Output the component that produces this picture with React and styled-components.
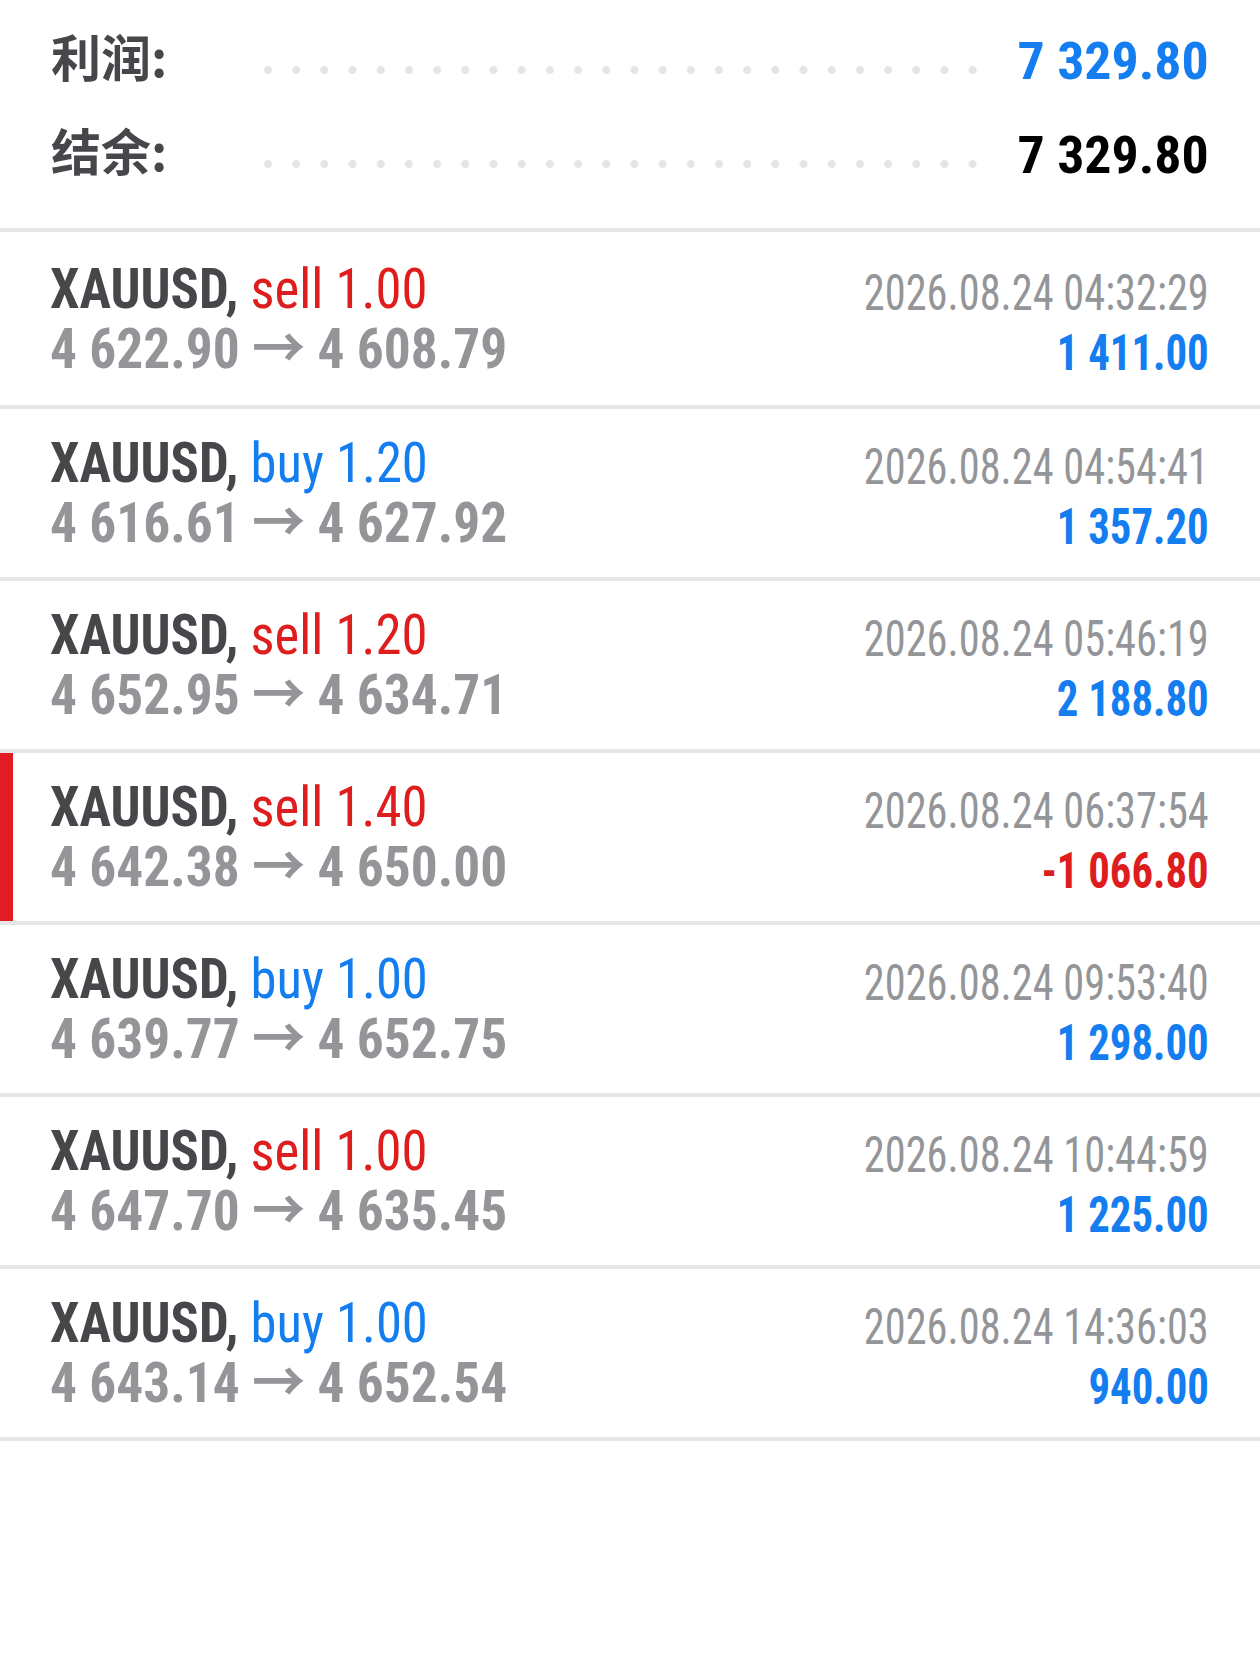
import styled, { createGlobalStyle } from 'styled-components';

const GlobalStyle = createGlobalStyle`
  html, body {
    margin: 0;
    padding: 0;
    background: #fff;
  }
  body {
    font-family: "Roboto Condensed", Roboto, "Noto Sans CJK SC", sans-serif;
    font-stretch: condensed;
  }
`;

const BLUE = '#147df0';
const RED = '#de1e1e';
const DARK = '#47474b';
const GRAY = '#939598';
const LINE = '#e6e6e6';

const trades = [
  { side: 'sell', volume: '1.00', open: '4 622.90', close: '4 608.79', time: '2026.08.24 04:32:29', profit: '1 411.00' },
  { side: 'buy', volume: '1.20', open: '4 616.61', close: '4 627.92', time: '2026.08.24 04:54:41', profit: '1 357.20' },
  { side: 'sell', volume: '1.20', open: '4 652.95', close: '4 634.71', time: '2026.08.24 05:46:19', profit: '2 188.80' },
  { side: 'sell', volume: '1.40', open: '4 642.38', close: '4 650.00', time: '2026.08.24 06:37:54', profit: '-1 066.80', marked: true },
  { side: 'buy', volume: '1.00', open: '4 639.77', close: '4 652.75', time: '2026.08.24 09:53:40', profit: '1 298.00' },
  { side: 'sell', volume: '1.00', open: '4 647.70', close: '4 635.45', time: '2026.08.24 10:44:59', profit: '1 225.00' },
  { side: 'buy', volume: '1.00', open: '4 643.14', close: '4 652.54', time: '2026.08.24 14:36:03', profit: '940.00' },
];

function App() {
  return (
    <Page>
      <GlobalStyle />
      <Summary>
        <SummaryRow>
          <Label>利润:</Label>
          <Dots />
          <Value color={BLUE}>7 329.80</Value>
        </SummaryRow>
        <SummaryRow>
          <Label>结余:</Label>
          <Dots />
          <Value color="#000">7 329.80</Value>
        </SummaryRow>
      </Summary>

      {trades.map((t, i) => (
        <TradeRow key={i} $marked={t.marked} $first={i === 0}>
          <Left>
            <Symbol>
              XAUUSD, <Side color={t.side === 'buy' ? BLUE : RED}>{t.side} {t.volume}</Side>
            </Symbol>
            <Prices>
              {t.open} <Arrow>→</Arrow> {t.close}
            </Prices>
          </Left>
          <Right>
            <Time>{t.time}</Time>
            <Profit color={t.profit.startsWith('-') ? RED : BLUE}>{t.profit}</Profit>
          </Right>
        </TradeRow>
      ))}
    </Page>
  );
}

export default App;

const Page = styled.div`
  width: 1260px;
  min-height: 1661px;
  background: #fff;
`;

const Summary = styled.div`
  padding: 14px 51px 26px 51px;
  border-bottom: 4px solid ${LINE};
`;

const SummaryRow = styled.div`
  display: flex;
  align-items: center;
  height: 94px;
`;

const Label = styled.div`
  flex: none;
  margin-bottom: 12px;
  font-family: "Noto Sans CJK SC", sans-serif;
  font-weight: 700;
  font-size: 50px;
  color: ${DARK};
`;

const Dots = styled.div`
  flex: 1;
  align-self: stretch;
  margin: 0 37px 0 87px;
  background-image: radial-gradient(circle, #e5e5e5 3.6px, transparent 4.4px);
  background-size: 28px 10px;
  background-repeat: space no-repeat;
  background-position: left 0 top 51px;
`;

const Value = styled.div`
  font-weight: 700;
  font-size: 52px;
  color: ${(p) => p.color};
  transform: scaleX(1.035);
  transform-origin: right center;
`;

const TradeRow = styled.div`
  display: flex;
  justify-content: space-between;
  align-items: flex-start;
  padding: ${(p) => (p.$first ? '27px 51px 26px 50px' : '24px 51px 24px 50px')};
  border-bottom: 4px solid ${LINE};
  box-shadow: ${(p) => (p.$marked ? 'inset 13px 0 0 #e31b23' : 'none')};
  line-height: 60px;
`;

const Left = styled.div`
  display: flex;
  flex-direction: column;
`;

const Right = styled.div`
  display: flex;
  flex-direction: column;
  align-items: flex-end;
  margin-top: 4px;
  margin-bottom: -4px;
`;

const Symbol = styled.div`
  font-size: 56px;
  font-weight: 700;
  color: ${DARK};
  white-space: pre;
  transform: scaleX(0.94);
  transform-origin: left center;
`;

const Side = styled.span`
  font-weight: 400;
  color: ${(p) => p.color};
`;

const Prices = styled.div`
  font-size: 56px;
  font-weight: 700;
  color: ${GRAY};
  white-space: pre;
  transform: scaleX(0.953);
  transform-origin: left center;
`;

const Arrow = styled.span`
  font-weight: 700;
`;

const Time = styled.div`
  font-size: 50px;
  font-weight: 400;
  color: ${GRAY};
  transform: scaleX(0.848);
  transform-origin: right center;
`;

const Profit = styled.div`
  font-size: 50px;
  font-weight: 700;
  color: ${(p) => p.color};
  transform: scaleX(0.855);
  transform-origin: right center;
`;
